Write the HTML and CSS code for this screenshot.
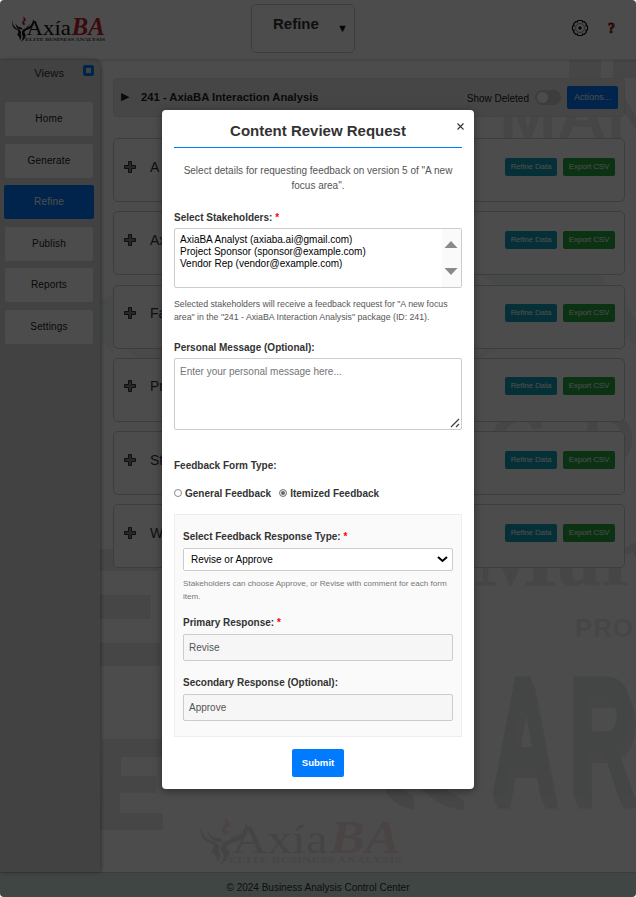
FILE: index.html
```html
<!DOCTYPE html>
<html lang="en">
<head>
<meta charset="utf-8">
<title>Business Analysis Control Center</title>
<link rel="stylesheet" href="styles.css">
</head>
<body>
<svg class="defs" width="0" height="0">
  <defs>
    <g id="phoenix">
      <path d="M1 3Q-1 12 8 15Q11 17 10 20Q6 19 7 16Q-2 14 1 3zM4 8Q5 12 11 13L12 15Q4 15 4 8z" fill="#111"/>
      <path d="M24 3Q27 12 18 15Q12 17 15 20Q17 24 10 29Q14 23 11 20Q10 15 17 13Q23 11 24 3zM20 7Q20 11 15 13Q20 13 20 7zM7 18Q13 21 9 27Q9 23 6 21z" fill="#111"/>
      <path d="M13 1Q17 4 14 6Q12 8 15 9L13 10Q10 8 13 5Q14 4 13 1z" fill="#c8202c" stroke="#c8202c" stroke-width=".6"/>
    </g>
    <g id="logo">
      <use href="#phoenix"/>
      <g font-family="Liberation Serif, serif">
        <text x="16.500" y="21.500" font-size="24" textLength="50" lengthAdjust="spacingAndGlyphs" fill="#111">Axía</text>
        <text x="67.500" y="21.500" font-size="27" font-weight="bold" font-style="italic" textLength="37" lengthAdjust="spacingAndGlyphs" fill="#c8202c">BA</text>
        <text x="15" y="27.500" font-size="5.500" font-weight="bold" textLength="90" lengthAdjust="spacingAndGlyphs" fill="#444">ELITE BUSINESS ANALYSIS</text>
      </g>
    </g>
    <path id="plus" d="M4.500 .5h3v4h4v3h-4v4h-3v-4h-4v-3h4z" fill="#888" stroke="#333" stroke-width="1"/>
  </defs>
</svg>
<div class="window">
  <header class="header">
    <svg class="logo" width="94" height="26" viewBox="0 0 106 29" preserveAspectRatio="none"><use href="#logo"/></svg>
    <div class="picker"><span>Refine</span><span class="caret">▼</span></div>
    <div class="tools">
      <svg width="18" height="18" viewBox="0 0 18 18" fill="none" stroke="#111" stroke-width="1.2">
        <path d="M6.8 1.5h4.4l.5 1.5 1.6-.4 2.2 2.4-.7 1.7 1.7.5v3.6l-1.7.5.7 1.7-2.2 2.4-1.6-.4-.5 1.5H6.8L6.3 15l-1.6.4L2.500 13l.7-1.700-1.700-.5V7.200l1.700-.5L2.500 5l2.200-2.400 1.600.4z"/>
        <circle cx="9" cy="9" r="4.500" stroke="#888" stroke-width="1"/><circle cx="9" cy="9" r="1.100" fill="#111"/>
      </svg>
      <span class="help">?</span>
    </div>
  </header>
  <div class="middle">
    <nav class="sidebar">
      <div class="views"><span>Views</span><i class="pin"></i></div>
      <a>Home</a><a>Generate</a><a class="on">Refine</a><a>Publish</a><a>Reports</a><a>Settings</a>
    </nav>
    <main class="main">
      <svg class="backdrop" width="536" height="813" viewBox="100 60 536 813" aria-hidden="true">
        <g fill="#ebebeb">
          <path d="M100 549h58v22h-58zM100 595h51v24h-51zM100 643h60v23h-60z"/>
          <path d="M102 739h60v18h-41v19h35v17h-36v20h43v17H100z"/>
          <path d="M569 60h32v18h-32zM613 60h23v18h-23z"/>
          <path d="M386 789l16 0 12 8v13q-18-3-28-17zM420 789h26l18 12v9q-24-2-36-16z"/>
          <path d="M480 275h120l8 10h-112zM625 300l11 20v26l-11-8zM478 357l8-9h13l-20 10z" fill="#f0f4f3"/>
          <path d="M101 300l12-6v60l-12-14zM125 348h37v10h-26z" fill="#f2f5f4"/>
        </g>
        <g font-family="Liberation Sans, sans-serif" font-weight="bold" fill="#ececec">
          <text x="499" y="138" font-size="62" textLength="158" lengthAdjust="spacingAndGlyphs">MAN</text>
          <text x="488" y="465" font-size="74"><tspan font-style="italic">G</tspan><tspan x="582">D</tspan></text>
          <text x="474" y="585" font-size="88" font-family="Liberation Serif, serif">Mar</text>
          <text x="575" y="637" font-size="26" textLength="58">PRO</text>
          <g class="block" fill="#e3e9e7"><text x="490" y="797" font-size="174" textLength="66" lengthAdjust="spacingAndGlyphs">A</text><text x="567" y="797" font-size="174" textLength="69" lengthAdjust="spacingAndGlyphs">R</text></g>
        </g>
        <use href="#logo" transform="translate(200 817) scale(1.92 1.68)" opacity=".11"/>
      </svg>
      <div class="package">
        <span class="tri">▶</span><b>241 - AxiaBA Interaction Analysis</b>
        <span class="deleted">Show Deleted</span><i class="switch"></i><span class="btn actions">Actions...</span>
      </div>
      <div class="cards">
        <div class="card"><svg width="12" height="12"><use href="#plus"/></svg><span class="name">A new</span><span class="btn data">Refine Data</span><span class="btn csv">Export CSV</span></div>
        <div class="card"><svg width="12" height="12"><use href="#plus"/></svg><span class="name">Ax</span><span class="btn data">Refine Data</span><span class="btn csv">Export CSV</span></div>
        <div class="card"><svg width="12" height="12"><use href="#plus"/></svg><span class="name">Fa</span><span class="btn data">Refine Data</span><span class="btn csv">Export CSV</span></div>
        <div class="card"><svg width="12" height="12"><use href="#plus"/></svg><span class="name">Pr</span><span class="btn data">Refine Data</span><span class="btn csv">Export CSV</span></div>
        <div class="card"><svg width="12" height="12"><use href="#plus"/></svg><span class="name">St</span><span class="btn data">Refine Data</span><span class="btn csv">Export CSV</span></div>
        <div class="card"><svg width="12" height="12"><use href="#plus"/></svg><span class="name">W</span><span class="btn data">Refine Data</span><span class="btn csv">Export CSV</span></div>
      </div>
    </main>
  </div>
  <footer class="footer">© 2024 Business Analysis Control Center</footer>
  <div class="overlay">
    <section class="modal">
      <svg class="close" width="7" height="7" viewBox="0 0 7 7"><path d="M.5.5l6 6M6.500.5l-6 6" stroke="#333" stroke-width="1.100"/></svg>
      <h1>Content Review Request</h1>
      <p class="intro">Select details for requesting feedback on version 5 of "A new<br>focus area".</p>
      <div class="label">Select Stakeholders: <em>*</em></div>
      <div class="list">
        <div class="options"><div>AxiaBA Analyst (axiaba.ai@gmail.com)</div><div>Project Sponsor (sponsor@example.com)</div><div>Vendor Rep (vendor@example.com)</div></div>
        <div class="scroll"><svg width="14" height="36" viewBox="0 0 14 36" fill="#8a8a8a"><path d="M7 1l6.500 7H.5zM7 35l6.500-7H.5z"/></svg></div>
      </div>
      <p class="note">Selected stakeholders will receive a feedback request for "A new focus<br>area" in the "241 - AxiaBA Interaction Analysis" package (ID: 241).</p>
      <div class="label message-label">Personal Message (Optional):</div>
      <div class="message"><span>Enter your personal message here...</span><svg width="10" height="10" viewBox="0 0 10 10"><path d="M1 9l8-8M6 9l3-3" stroke="#444" stroke-width="1.300"/></svg></div>
      <div class="label type-label">Feedback Form Type:</div>
      <div class="radios"><i class="radio"></i><span class="general">General Feedback</span><i class="radio checked"></i><span class="itemized">Itemized Feedback</span></div>
      <div class="panel">
        <div class="label response-label">Select Feedback Response Type: <em>*</em></div>
        <div class="select"><span>Revise or Approve</span><svg width="11" height="7" viewBox="0 0 11 7" fill="none"><path d="M1 1l4.500 4L10 1" stroke="#000" stroke-width="2"/></svg></div>
        <p class="hint">Stakeholders can choose Approve, or Revise with comment for each form<br>item.</p>
        <div class="label primary-label">Primary Response: <em>*</em></div>
        <div class="field">Revise</div>
        <div class="label secondary-label">Secondary Response (Optional):</div>
        <div class="field">Approve</div>
      </div>
      <div class="submit">Submit</div>
    </section>
  </div>
</div>
</body>
</html>
```
FILE: styles.css
```css
* { box-sizing: border-box; }
body { margin: 0; background: #fff; font-family: "Liberation Sans", Arial, sans-serif; font-size: 10px; color: #333; }
h1, p { margin: 0; }
.defs { position: absolute; }
.window { position: relative; width: 636px; height: 897px; border-radius: 4px; overflow: hidden; display: flex; flex-direction: column; background: #fff; }

.header { height: 60px; flex: none; display: grid; grid-template-columns: 251px 104px 1fr; border-bottom: 1px solid #e4e4e4; box-shadow: 0 1px 2px rgba(0,0,0,.12); z-index: 1; }
.logo { margin: 16px 0 0 12px; }
.picker { height: 49px; margin-top: 4px; border: 1px solid #ccc; border-radius: 5px; display: flex; padding: 9px 6px 0 21px; justify-content: space-between; font-size: 15px; line-height: 19px; font-weight: bold; }
.caret { font-size: 11px; line-height: 28px; color: #111; }
.tools { display: flex; justify-content: flex-end; align-items: center; gap: 19px; padding: 0 20px 4px 0; }
.help { color: #c8301c; font: bold 14px "Liberation Serif", serif; -webkit-text-stroke: .8px #7a1a0c; width: 8px; padding-top: 2px; }

.middle { height: 812px; flex: none; display: flex; }
.sidebar { width: 100px; padding: 0 7px 0 5px; background: #dcdcdc; border-radius: 0 8px 0 0; box-shadow: 1px 0 4px rgba(0,0,0,.4); display: flex; flex-direction: column; gap: 8px; z-index: 1; }
.views { height: 34px; display: flex; justify-content: flex-end; gap: 19px; padding-top: 5px; font-size: 11.200px; line-height: 17px; }
.pin { width: 11px; height: 11px; border: 3px solid #007bff; border-radius: 2px; background: #ddd; margin-right: -1px; }
.sidebar a { height: 34px; margin-bottom: -.5px; background: #fff; border-radius: 2px; text-align: center; line-height: 34px; font-size: 10px; letter-spacing: .15px; color: #222; }
.sidebar a.on { background: #007bff; color: #fff; margin-left: -1px; margin-right: -1px; }

.main { flex: 1; position: relative; padding: 18px 11px 0 13px; }
.backdrop { position: absolute; left: 0; top: 0; }
.block text { text-shadow: 2px 3px #ececec, 4px 6px #ececec, 6px 9px #ececec, 9px 12px #ececec; }
.package { position: relative; height: 39px; display: flex; align-items: center; padding: 0 6px 2px 7px; background: #e9ecef; border: 1px solid #dde0e3; border-radius: 4px; color: #222; }
.tri { width: 20px; font-size: 11px; }
.package b { font-size: 11.250px; }
.deleted { margin: 3px 6px 0 auto; font-size: 10px; }
.switch { width: 26px; height: 15px; margin: 2px 6px 0 0; border-radius: 8px; background: #ccc; padding: 2px; }
.switch::before { content: ""; display: block; width: 11px; height: 11px; border-radius: 50%; background: #fff; }
.btn { border-radius: 2px; color: #fff; text-align: center; font-size: 8px; }
.actions { width: 51px; height: 23px; line-height: 22px; margin-top: 1px; background: #007bff; font-size: 9px; }
.cards { position: relative; display: flex; flex-direction: column; gap: 9.300px; margin-top: 21px; }
.card { height: 64px; display: flex; align-items: center; padding: 0 9px 7px 10px; border: 1px solid #ccc; border-radius: 5px; background: rgba(255,255,255,.9); }
.name { flex: 1; margin-left: 14px; font-size: 14px; }
.data, .csv { width: 52px; height: 18px; line-height: 17px; background: #17a2b8; letter-spacing: -.15px; }
.csv { margin-left: 6px; background: #28a745; }
.footer { height: 25px; flex: none; background: #d5e9e2; border-top: 1px solid #ccc; text-align: center; line-height: 29px; font-size: 10px; }

.overlay { position: absolute; inset: 0; z-index: 5; background: rgba(0,0,0,.7); display: flex; justify-content: center; align-items: flex-start; padding-top: 110px; }
.modal { position: relative; width: 312px; height: 679px; padding: 0 12px; background: #fff; border-radius: 4px; box-shadow: 0 2px 8px rgba(0,0,0,.4); }
.close { position: absolute; right: 10px; top: 13px; }
h1 { height: 38px; padding-top: 11px; border-bottom: 1px solid #007bff; text-align: center; font-size: 15px; line-height: 20px; }
.intro { margin-top: 15px; text-align: center; line-height: 15px; color: #555; font-size: 10px; }
.label { font-size: 10px; line-height: 12px; font-weight: bold; }
.label em { color: red; font-style: normal; }
.intro + .label { margin-top: 19px; }
.list { height: 60px; margin-top: 4px; display: flex; justify-content: space-between; border: 1px solid #ccc; border-radius: 2px; color: #000; line-height: 12px; font-size: 10px; }
.options { padding: 5px; }
.scroll { width: 19px; padding: 11px 2px; background: #fafafa; }
.note { margin-top: 10px; font-size: 8.750px; line-height: 13px; color: #555; }
.message-label { margin-top: 18px; }
.message { height: 72px; margin-top: 4px; padding: 6px 1px 1px 5px; display: flex; justify-content: space-between; border: 1px solid #ccc; border-radius: 2px; color: #757575; line-height: 13px; }
.message svg { align-self: flex-end; }
.type-label { margin-top: 30px; }
.radios { display: flex; align-items: center; height: 14px; margin-top: 14px; font-weight: bold; }
.radio { width: 8px; height: 8px; border: 1px solid #888; border-radius: 50%; margin-right: 3px; }
.general { margin-right: 8px; }
.checked { background: #666; box-shadow: inset 0 0 0 1px #fff; }
.panel { height: 223px; margin-top: 14px; padding: 16px 8px 0; background: #fafafa; border: 1px solid #eee; }
.select { height: 23px; margin-top: 5px; display: flex; justify-content: space-between; align-items: center; padding: 0 4px 0 7px; border: 1px solid #ccc; border-radius: 2px; background: #fff; color: #000; }
.hint { margin-top: 6px; font-size: 8.100px; line-height: 13px; color: #777; }
.primary-label { margin-top: 14px; }
.field { height: 27px; margin-top: 5px; padding-left: 5px; border: 1px solid #ccc; border-radius: 2px; background: #f6f6f6; line-height: 25px; font-size: 10px; color: #555; }
.secondary-label { margin-top: 16px; }
.submit { width: 52px; height: 28px; margin: 12px auto 0; background: #007bff; border-radius: 2px; color: #fff; text-align: center; line-height: 28px; font-size: 9.600px; font-weight: bold; }
```
